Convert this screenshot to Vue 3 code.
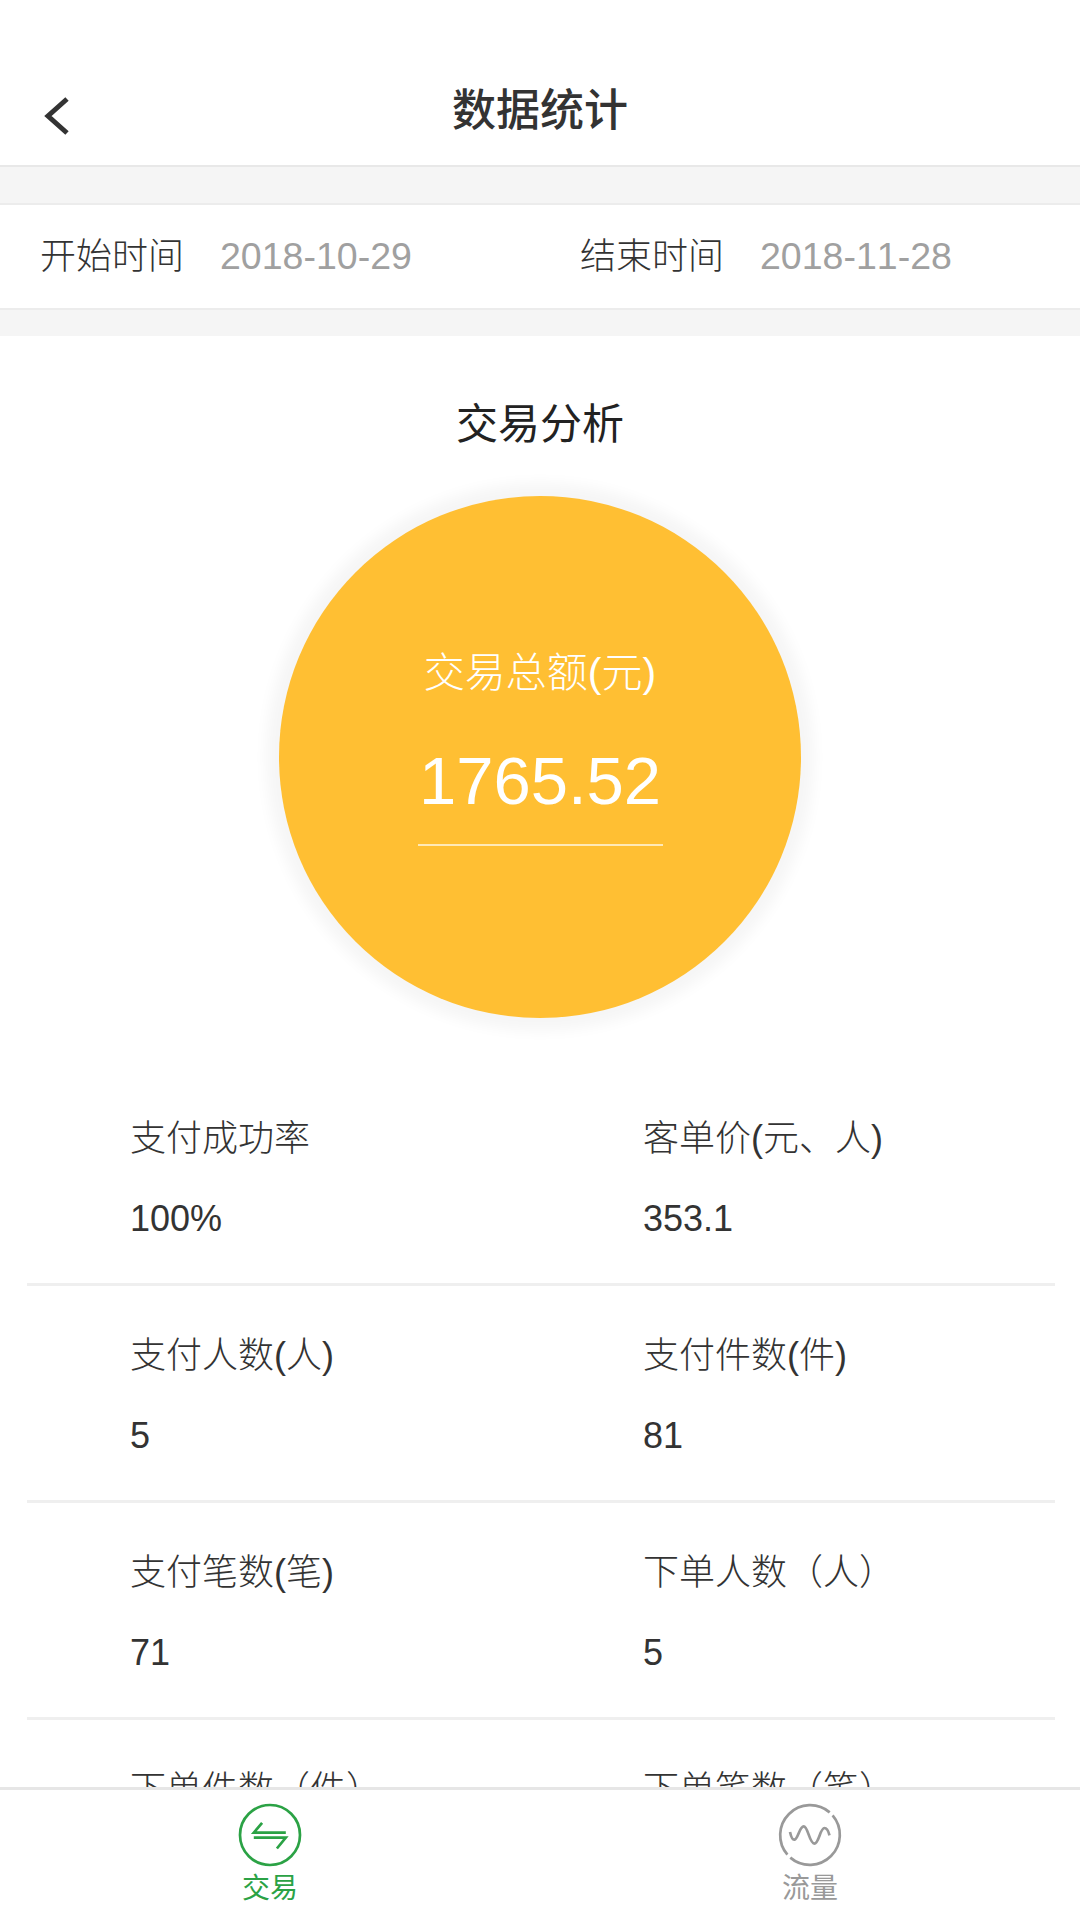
<script setup>
const rows = [
  [{ label: '支付成功率', value: '100%' }, { label: '客单价(元、人)', value: '353.1' }],
  [{ label: '支付人数(人)', value: '5' }, { label: '支付件数(件)', value: '81' }],
  [{ label: '支付笔数(笔)', value: '71' }, { label: '下单人数（人）', value: '5' }],
  [{ label: '下单件数（件）', value: '' }, { label: '下单笔数（笔）', value: '' }]
]
</script>

<template>
  <div class="page">
    <header class="header">
      <svg class="back" viewBox="0 0 30 42" aria-hidden="true">
        <path d="M25 4 L6 21 L25 38" />
      </svg>
      <h1 class="title">数据统计</h1>
    </header>

    <div class="band band-top"></div>

    <div class="dates">
      <div class="date-item">
        <span class="date-label">开始时间</span>
        <span class="date-value">2018-10-29</span>
      </div>
      <div class="date-item">
        <span class="date-label">结束时间</span>
        <span class="date-value">2018-11-28</span>
      </div>
    </div>

    <div class="band band-bottom"></div>

    <main class="content">
      <h2 class="section-title">交易分析</h2>
      <div class="circle">
        <div class="circle-label">交易总额(元)</div>
        <div class="circle-value">1765.52</div>
        <div class="circle-line"></div>
      </div>

      <div class="stats">
        <div v-for="(row, i) in rows" :key="i" class="stat-row">
          <div v-for="cell in row" :key="cell.label" class="stat">
            <div class="stat-label">{{ cell.label }}</div>
            <div class="stat-value">{{ cell.value }}</div>
          </div>
        </div>
      </div>
    </main>

    <nav class="tabs">
      <div class="tab tab-active">
        <svg class="tab-icon" viewBox="0 0 64 64" aria-hidden="true">
          <circle cx="32" cy="32" r="30" />
          <path d="M24.1 19.8 L15.8 29.7 H47.8" />
          <path d="M15.8 34.6 H47.8 L38.9 45.5" />
        </svg>
        <span class="tab-text">交易</span>
      </div>
      <div class="tab">
        <svg class="tab-icon" viewBox="0 0 64 64" aria-hidden="true">
          <path d="M51.7 9.4 A30 30 0 0 0 9.4 51.7" />
          <path d="M12.3 54.6 A30 30 0 0 0 54.6 12.3" />
          <path d="M12 29 C13 33.5 14.5 37 16.5 36.6 C20 36 21.5 23.4 25.7 23.4 C30 23.4 31.5 40.6 36.3 40.6 C41 40.6 42 25 46.5 25 C48.5 25 50.5 28.5 51.5 32.3" />
        </svg>
        <span class="tab-text">流量</span>
      </div>
    </nav>
  </div>
</template>

<style>
html,
body {
  margin: 0;
  background: #fff;
}
</style>

<style scoped>
.page {
  width: 1080px;
  height: 1920px;
  display: flex;
  flex-direction: column;
  overflow: hidden;
  background: #fff;
  color: #333;
  font-family: "Liberation Sans", "Noto Sans CJK SC", sans-serif;
}

.header {
  height: 165px;
  flex: none;
  box-sizing: border-box;
  display: flex;
  align-items: center;
  justify-content: center;
  padding-top: 57px;
  position: relative;
}

.back {
  position: absolute;
  left: 42px;
  top: 95px;
  width: 30px;
  height: 42px;
  fill: none;
  stroke: #333;
  stroke-width: 5;
}

.title {
  margin: 0;
  font-size: 44px;
  font-weight: 500;
  line-height: 60px;
}

.band {
  flex: none;
  box-sizing: border-box;
  background: #f5f5f5;
}

.band-top {
  height: 40px;
  border-top: 2px solid #e8e8e8;
  border-bottom: 2px solid #ececec;
}

.band-bottom {
  height: 28px;
  border-top: 2px solid #ececec;
}

.dates {
  flex: none;
  height: 103px;
  display: flex;
}

.date-item {
  width: 540px;
  box-sizing: border-box;
  padding: 26px 0 0 40px;
  display: flex;
  align-items: baseline;
  gap: 36px;
}

.date-label {
  font-size: 36px;
  font-weight: 300;
  line-height: 50px;
  color: #333;
}

.date-value {
  font-size: 37.5px;
  font-kerning: none;
  line-height: 50px;
  color: #a0a0a0;
}

.content {
  flex: 1;
  min-height: 0;
  overflow: hidden;
}

.section-title {
  margin: 59px 0 41px;
  text-align: center;
  font-size: 42px;
  font-weight: 400;
  line-height: 60px;
  color: #222;
}

.circle {
  width: 522px;
  height: 522px;
  margin: 0 auto;
  box-sizing: border-box;
  padding-top: 150px;
  border-radius: 50%;
  background: #ffbf33;
  box-shadow: 0 0 14px 13px #f6f6f6;
  display: flex;
  flex-direction: column;
  align-items: center;
  color: #fff;
}

.circle-label {
  font-size: 41px;
  font-weight: 300;
  line-height: 54px;
}

.circle-value {
  margin-top: 41px;
  font-size: 67px;
  line-height: 80px;
}

.circle-line {
  width: 245px;
  height: 2px;
  margin-top: 23px;
  background: rgba(255, 255, 255, 0.65);
}

.stats {
  margin: 51px 25px 0 27px;
}

.stat-row {
  height: 217px;
  box-sizing: border-box;
  padding-left: 103px;
  display: grid;
  grid-template-columns: 513px 1fr;
  border-bottom: 3px solid #efefef;
}

.stat-label {
  margin-top: 45px;
  font-size: 36px;
  font-weight: 300;
  line-height: 50px;
  color: #333;
}

.stat-value {
  margin-top: 30px;
  font-size: 36px;
  font-kerning: none;
  line-height: 50px;
  color: #333;
}

.tabs {
  flex: none;
  height: 133px;
  box-sizing: border-box;
  display: flex;
  border-top: 3px solid #e6e6e6;
  background: #fff;
}

.tab {
  width: 540px;
  display: flex;
  flex-direction: column;
  align-items: center;
  padding-top: 13px;
  color: #999;
  stroke: #999;
}

.tab-active {
  color: #2ba245;
  stroke: #2ba245;
}

.tab-icon {
  width: 64px;
  height: 64px;
  fill: none;
  stroke-width: 2.7;
  flex: none;
}

.tab-text {
  margin-top: 4px;
  font-size: 28px;
  font-weight: 400;
  line-height: 36px;
}
</style>
